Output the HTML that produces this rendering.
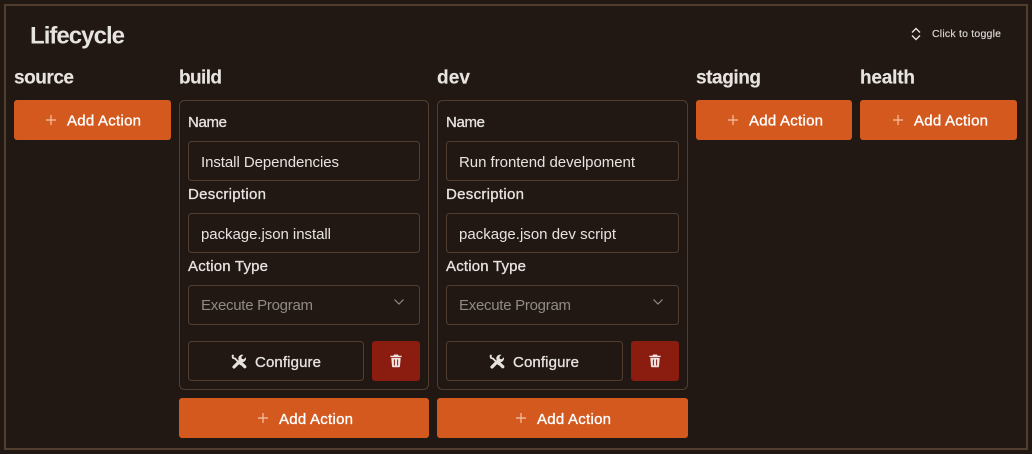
<!DOCTYPE html>
<html><head><meta charset="utf-8"><style>
html,body{margin:0;padding:0;background:#211814;width:1032px;height:454px;overflow:hidden}
svg{display:block}
text{font-family:"Liberation Sans",sans-serif}
.h{font-size:19px;font-weight:700;fill:#e7e3df;stroke:#e7e3df;stroke-width:.15}
.b{font-size:15px;fill:#fff;stroke:#fff;stroke-width:.35}
.l{font-size:15px;fill:#e7e3df;stroke:#e7e3df;stroke-width:.3}
.i{font-size:15px;fill:#e7e3df}
.s{font-size:15px;fill:#8f8a85}
.c{font-size:15px;fill:#e7e3df;stroke:#e7e3df;stroke-width:.3}
.box{fill:none;stroke:#523e2e;stroke-width:1}
.or{fill:#d4591f}
.pl{stroke:#f3c3a8;stroke-width:1.200;fill:none}
</style></head><body>
<svg width="1032" height="454" viewBox="0 0 1032 454" xmlns="http://www.w3.org/2000/svg">
<defs>
<g id="tools">
<path d="M1.500 0.500L0.500 1.500L1 3.500L3 4L9 10.200" fill="none" stroke="#e7e3df" stroke-width="1.800" stroke-linejoin="round"/>
<path d="M9.500 9L12.800 12.300" stroke="#e7e3df" stroke-width="3.200" stroke-linecap="round"/>
<path d="M2 12.500L8.500 6" stroke="#e7e3df" stroke-width="3.200" stroke-linecap="round"/>
<path d="M13.800 2.800L11.800 4.800L9.800 4.400L9.400 2.400L11.400 0.400A3.800 3.800 0 0 0 6.800 5.800L8.600 7.400A3.800 3.800 0 0 0 13.800 2.800Z" fill="#e7e3df"/>
</g>
<g id="trash">
<path d="M1.300 3.800H10.700L10 12.200A1.200 1.200 0 0 1 8.800 13.300H3.200A1.200 1.200 0 0 1 2 12.200Z" fill="#f0e4e0"/>
<path d="M0.300 1.800H3.400L4 0.500H8L8.600 1.800H11.700V3H0.300Z" fill="#f0e4e0"/>
<path d="M4.400 5.500V11.500M7.600 5.500V11.500" stroke="#8a1c10" stroke-width="1"/>
</g>
</defs>
<rect x="5" y="5" width="1022" height="444" fill="none" stroke="#523e2e" stroke-width="2"/>
<text x="30" y="43.500" font-size="24" font-weight="700" fill="#e7e3df" textLength="95">Lifecycle</text>
<path d="M912 32.500l4-4 4 4M912 35.500l4 4 4-4" fill="none" stroke="#e7e3df" stroke-width="1.400"/>
<text x="932" y="37" font-size="10.500" fill="#dcd8d4" stroke="#dcd8d4" stroke-width=".15" textLength="69">Click to toggle</text>

<text class="h" x="14" y="83.500" textLength="60">source</text>
<text class="h" x="179" y="83.500" textLength="43">build</text>
<text class="h" x="437" y="83.500" textLength="33">dev</text>
<text class="h" x="696" y="83.500" textLength="65">staging</text>
<text class="h" x="860" y="83.500" textLength="55">health</text>

<rect class="or" x="14" y="100" width="157" height="40" rx="3"/>
<path class="pl" d="M46 120h10M51 115v10"/>
<text class="b" x="67" y="125.500" textLength="74">Add Action</text>
<rect class="or" x="696" y="100" width="156" height="40" rx="3"/>
<path class="pl" d="M728 120h10M733 115v10"/>
<text class="b" x="749" y="125.500" textLength="74">Add Action</text>
<rect class="or" x="860" y="100" width="157" height="40" rx="3"/>
<path class="pl" d="M893 120h10M898 115v10"/>
<text class="b" x="914" y="125.500" textLength="74">Add Action</text>

<!-- build -->
<rect class="box" x="179.500" y="100.500" width="249" height="289" rx="5"/>
<text class="l" x="188" y="127" textLength="39">Name</text>
<rect class="box" x="188.500" y="141.500" width="231" height="39" rx="3"/>
<text class="i" x="201" y="167" textLength="138">Install Dependencies</text>
<text class="l" x="188" y="199" textLength="78">Description</text>
<rect class="box" x="188.500" y="213.500" width="231" height="39" rx="3"/>
<text class="i" x="201" y="239" textLength="130">package.json install</text>
<text class="l" x="188" y="271" textLength="80">Action Type</text>
<rect class="box" x="188.500" y="285.500" width="231" height="39" rx="3"/>
<text class="s" x="201" y="310" textLength="112">Execute Program</text>
<path d="M394.500 299.500l4.500 4.500 4.500-4.500" fill="none" stroke="#8f8a85" stroke-width="1.200"/>
<rect class="box" x="188.500" y="341.500" width="175" height="39" rx="3"/>
<use href="#tools" x="232" y="354.500"/>
<text class="c" x="255" y="367" textLength="66">Configure</text>
<rect x="372" y="341" width="48" height="40" rx="3" fill="#8a1c10"/>
<use href="#trash" x="390" y="354"/>
<rect class="or" x="179" y="398" width="250" height="40" rx="3"/>
<path class="pl" d="M258 418h10M263 413v10"/>
<text class="b" x="279" y="424" textLength="74">Add Action</text>

<!-- dev -->
<rect class="box" x="437.500" y="100.500" width="250" height="289" rx="5"/>
<text class="l" x="446" y="127" textLength="39">Name</text>
<rect class="box" x="446.500" y="141.500" width="232" height="39" rx="3"/>
<text class="i" x="459" y="167" textLength="176">Run frontend develpoment</text>
<text class="l" x="446" y="199" textLength="78">Description</text>
<rect class="box" x="446.500" y="213.500" width="232" height="39" rx="3"/>
<text class="i" x="459" y="239" textLength="157">package.json dev script</text>
<text class="l" x="446" y="271" textLength="80">Action Type</text>
<rect class="box" x="446.500" y="285.500" width="232" height="39" rx="3"/>
<text class="s" x="459" y="310" textLength="112">Execute Program</text>
<path d="M653.500 299.500l4.500 4.500 4.500-4.500" fill="none" stroke="#8f8a85" stroke-width="1.200"/>
<rect class="box" x="446.500" y="341.500" width="176" height="39" rx="3"/>
<use href="#tools" x="490" y="354.500"/>
<text class="c" x="513" y="367" textLength="66">Configure</text>
<rect x="631" y="341" width="48" height="40" rx="3" fill="#8a1c10"/>
<use href="#trash" x="649" y="354"/>
<rect class="or" x="437" y="398" width="251" height="40" rx="3"/>
<path class="pl" d="M516 418h10M521 413v10"/>
<text class="b" x="537" y="424" textLength="74">Add Action</text>
</svg>
</body></html>
